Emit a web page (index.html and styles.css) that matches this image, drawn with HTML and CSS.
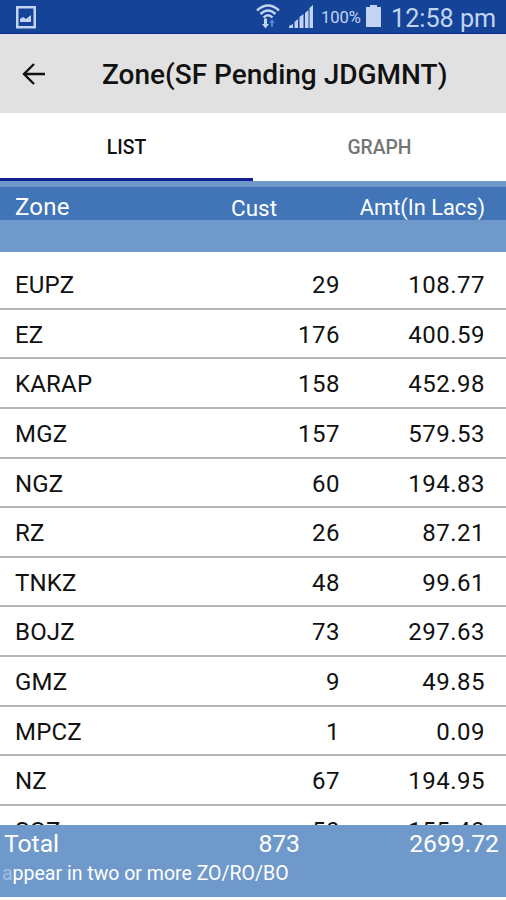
FILE: index.html
```html
<!DOCTYPE html>
<html lang="en">
<head>
    <meta charset="UTF-8">
    <meta name="viewport" content="width=device-width, initial-scale=1.0">
    <title>Zone(SF Pending JDGMNT)</title>
    <link rel="stylesheet" href="styles.css">
</head>
<body>
    <div class="status-bar">
        <svg class="icon-picture" width="20" height="23" viewBox="0 0 20 23">
            <rect x="1.25" y="1.25" width="17.5" height="20" fill="none" stroke="#c3d4f3" stroke-width="2.5"/>
            <path d="M4 16v-3l3-2 3 2 5-4v7z" fill="#c3d4f3"/>
        </svg>
        <svg class="icon-wifi" width="24" height="26" viewBox="0 0 24 26">
            <g fill="none" stroke="#c3d4f3" stroke-width="2.4">
                <path d="M1 6.5Q12-3.500 23 6.500"/>
                <path d="M4.500 10Q12 3 19.500 10"/>
                <path d="M7.500 13.500Q12 9 16.500 13.500"/>
            </g>
            <path d="M8 14.500h3V20h2l-3.500 4.500L6 20h2z" fill="#c3d4f3"/>
            <path d="M15 23v-4h-2l3-4 3 4h-2v4z" fill="#4f86d2"/>
        </svg>
        <svg class="icon-signal" width="25" height="24" viewBox="0 0 25 24">
            <path d="M0 23v-2l4-2v4zM5.500 23v-6l3.500-3v9zM10.500 23V12l4-3v14zM16 23V8l3.500-3v18zM20.500 23V3l3.500-3v23z" fill="#c3d4f3"/>
        </svg>
        <span class="percent">100%</span>
        <svg class="icon-battery" width="15" height="22" viewBox="0 0 15 22">
            <path d="M4 0h7v2h4v20H0V2h4z" fill="#c3d4f3"/>
        </svg>
        <span class="time">12:58 pm</span>
    </div>

    <div class="header">
        <svg width="24" height="24" viewBox="0 0 24 24">
            <path d="M23 12H2M12 2L2 12l10 10" fill="none" stroke="#111" stroke-width="2.400"/>
        </svg>
        <h1>Zone(SF Pending JDGMNT)</h1>
    </div>

    <div class="tabs">
        <div class="tab active"><span>LIST</span></div>
        <div class="tab"><span>GRAPH</span></div>
    </div>

    <div class="table-head">
        <div class="row head">
            <span>Zone</span><span class="cust">Cust</span><span class="amt">Amt(In Lacs)</span>
        </div>
    </div>

    <div class="list">
        <div class="row"><span>EUPZ</span><span>29</span><span>108.77</span></div>
        <div class="row"><span>EZ</span><span>176</span><span>400.59</span></div>
        <div class="row"><span>KARAP</span><span>158</span><span>452.98</span></div>
        <div class="row"><span>MGZ</span><span>157</span><span>579.53</span></div>
        <div class="row"><span>NGZ</span><span>60</span><span>194.83</span></div>
        <div class="row"><span>RZ</span><span>26</span><span>87.21</span></div>
        <div class="row"><span>TNKZ</span><span>48</span><span>99.61</span></div>
        <div class="row"><span>BOJZ</span><span>73</span><span>297.63</span></div>
        <div class="row"><span>GMZ</span><span>9</span><span>49.85</span></div>
        <div class="row"><span>MPCZ</span><span>1</span><span>0.09</span></div>
        <div class="row"><span>NZ</span><span>67</span><span>194.95</span></div>
        <div class="row"><span>SGZ</span><span>50</span><span>155.40</span></div>
    </div>

    <div class="footer">
        <div class="total"><span>Total</span><span>873</span><span>2699.72</span></div>
        <div class="note">appear in two or more ZO/RO/BO</div>
    </div>
</body>
</html>
```

FILE: styles.css
```css
* {
    box-sizing: border-box;
}
body {
    margin: 0;
    height: 900px;
    display: flex;
    flex-direction: column;
    overflow: hidden;
    background: #fff;
    color: #111;
    font-family: Roboto, sans-serif;
}
svg {
    display: block;
    flex: none;
}
.status-bar {
    display: flex;
    flex: none;
    height: 34px;
    padding: 0 11px 0 16px;
    background: #144398;
    border-bottom: 1px solid #0a2a8c;
    color: #c3d4f3;
    white-space: nowrap;
}
.icon-picture {
    margin-top: 6px;
}
.icon-wifi {
    margin: 4px 9px 0 auto;
}
.icon-signal {
    margin: 5px 7px 0 0;
}
.percent {
    width: 40px;
    margin-right: 5px;
    font-size: 16.5px;
    line-height: 36px;
}
.icon-battery {
    margin: 5px 10px 0 0;
}
.time {
    width: 104px;
    font-size: 25.2px;
    line-height: 38px;
}
.header {
    display: flex;
    flex: none;
    align-items: center;
    height: 79px;
    padding-left: 22px;
    background: #e1e1e1;
}
.header h1 {
    margin: 1px 0 0 56px;
    font-size: 28px;
    font-weight: 500;
    white-space: nowrap;
}
.tabs {
    display: flex;
    flex: none;
    height: 68px;
    font-size: 19.3px;
    font-weight: 500;
    line-height: 70px;
    text-align: center;
}
.tab {
    flex: 1;
    color: #757575;
}
.tab.active {
    color: #111;
    border-bottom: 3px solid #131f91;
}
.table-head {
    flex: none;
    height: 71px;
    padding-top: 6px;
    background: #7099cb;
}
.row {
    display: grid;
    grid-template-columns: 217px 108px 1fr;
    height: 49.65px;
    padding: 0 21px 0 15px;
    border-bottom: 2px solid #b5b5b5;
    font-size: 24px;
    line-height: 51px;
    letter-spacing: 0.5px;
}
.row span:first-child {
    letter-spacing: 0.2px;
}
.row span + span {
    text-align: right;
}
.row.head {
    height: 33px;
    border: none;
    background: #4175b8;
    color: #fff;
    font-size: 24px;
    line-height: 40px;
    letter-spacing: 0;
}
.row.head .cust {
    padding-left: 0;
    margin-left: -1px;
    font-size: 22.5px;
    line-height: 42px;
    text-align: left;
}
.row.head .amt {
    font-size: 21.8px;
    line-height: 42px;
}
.list {
    flex: 1;
    min-height: 0;
    padding-top: 8px;
    overflow: hidden;
}
.footer {
    flex: none;
    height: 72px;
    margin-bottom: 3px;
    background: #7099cb;
    color: #fff;
}
.total {
    display: grid;
    grid-template-columns: 150px 146px 1fr;
    padding: 0 7px 0 4px;
    font-size: 24.7px;
    line-height: 38px;
}
.total span + span {
    text-align: right;
}
.note {
    margin-top: -2px;
    padding-left: 2px;
    font-size: 19.5px;
    line-height: 26px;
}
.note::first-letter {
    color: #a5bfe1;
}
```
